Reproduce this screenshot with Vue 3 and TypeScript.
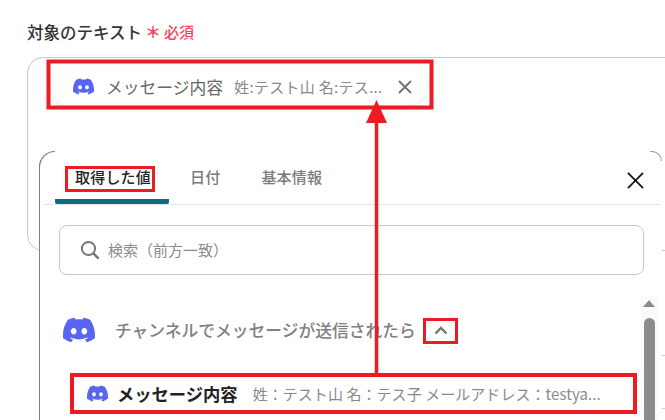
<script setup lang="ts">
const discord =
  'M20.317 4.3698a19.7913 19.7913 0 00-4.8851-1.5152.0741.0741 0 00-.0785.0371c-.211.3753-.4447.8648-.6083 1.2495-1.8447-.2762-3.68-.2762-5.4868 0-.1636-.3933-.4058-.8742-.6177-1.2495a.077.077 0 00-.0785-.037 19.7363 19.7363 0 00-4.8852 1.515.0699.0699 0 00-.0321.0277C.5334 9.0458-.319 13.5799.0992 18.0578a.0824.0824 0 00.0312.0561c2.0528 1.5076 4.0413 2.4228 5.9929 3.0294a.0777.0777 0 00.0842-.0276c.4616-.6304.8731-1.2952 1.226-1.9942a.076.076 0 00-.0416-.1057c-.6528-.2476-1.2743-.5495-1.8722-.8923a.077.077 0 01-.0076-.1277c.1258-.0943.2517-.1923.3718-.2914a.0743.0743 0 01.0776-.0105c3.9278 1.7933 8.18 1.7933 12.0614 0a.0739.0739 0 01.0785.0095c.1202.099.246.1981.3728.2924a.077.077 0 01-.0066.1276 12.2986 12.2986 0 01-1.873.8914.0766.0766 0 00-.0407.1067c.3604.698.7719 1.3628 1.225 1.9932a.076.076 0 00.0842.0286c1.961-.6067 3.9495-1.5219 6.0023-3.0294a.077.077 0 00.0313-.0552c.5004-5.177-.8382-9.6739-3.5485-13.6604a.061.061 0 00-.0312-.0286zM8.02 15.3312c-1.1825 0-2.1569-1.0857-2.1569-2.419 0-1.3332.9555-2.4189 2.157-2.4189 1.2108 0 2.1757 1.0952 2.1568 2.419 0 1.3332-.9555 2.4189-2.1569 2.4189zm7.9748 0c-1.1825 0-2.1569-1.0857-2.1569-2.419 0-1.3332.9554-2.4189 2.1569-2.4189 1.2108 0 2.1757 1.0952 2.1568 2.419 0 1.3332-.946 2.4189-2.1568 2.4189Z'
</script>

<template>
  <div class="page">
    <div class="label">
      <span class="label-text">対象のテキスト</span>
      <span class="star">＊</span>
      <span class="req">必須</span>
    </div>

    <div class="field">
      <div class="chip">
        <svg class="chip-icon" viewBox="0 0 24 24"><path :d="discord" fill="#5865f2" /></svg>
        <span class="chip-name">メッセージ内容</span>
        <span class="chip-value">姓:テスト山 名:テス...</span>
        <svg class="chip-close" viewBox="0 0 16 16">
          <path d="M2 2l12 12M14 2L2 14" stroke="#6f6f6f" stroke-width="1.8" fill="none" />
        </svg>
      </div>
    </div>

    <div class="popup">
      <div class="corner-tr"></div>
      <div class="tabs">
        <div class="tab active">取得した値</div>
        <div class="tab">日付</div>
        <div class="tab">基本情報</div>
        <svg class="popup-close" viewBox="0 0 18 18">
          <path d="M1 1l16 16M17 1L1 17" stroke="#111" stroke-width="1.8" fill="none" />
        </svg>
      </div>

      <div class="search">
        <svg class="search-icon" viewBox="0 0 20 20" fill="none" stroke="#757575">
          <circle cx="8.5" cy="8.5" r="6.6" stroke-width="2" />
          <path d="M13.4 13.4L18.6 18.6" stroke-width="2.4" />
        </svg>
        <span class="search-text">検索（前方一致）</span>
      </div>

      <div class="section">
        <svg class="section-icon" viewBox="0 0 24 24"><path :d="discord" fill="#5865f2" /></svg>
        <span class="section-title">チャンネルでメッセージが送信されたら</span>
        <svg class="chevron" viewBox="0 0 14 9" fill="none">
          <path d="M1.5 7.5L7 2l5.5 5.5" stroke="#757575" stroke-width="2.4" />
        </svg>
      </div>

      <div class="row">
        <svg class="row-icon" viewBox="0 0 24 24"><path :d="discord" fill="#5865f2" /></svg>
        <span class="row-name">メッセージ内容</span>
        <span class="row-value">姓：テスト山 名：テス子 メールアドレス：testya...</span>
      </div>

      <div class="scrollbar">
        <div class="scroll-up"></div>
        <div class="scroll-thumb"></div>
      </div>
      <div class="tick tick-a"></div>
      <div class="tick tick-b"></div>
    </div>

    <svg class="marks" viewBox="0 0 665 420" width="665" height="420">
      <g fill="none" stroke="#ed1c24">
        <rect x="48.5" y="61.5" width="383" height="46" stroke-width="4" />
        <rect x="66.5" y="167.5" width="87" height="23" stroke-width="3" />
        <rect x="424.5" y="319.5" width="32" height="23" stroke-width="3" />
        <rect x="72" y="375" width="563" height="37" stroke-width="4" />
        <path d="M376.5 120V373" stroke-width="3.5" />
      </g>
      <path d="M376.5 100L387 123H366Z" fill="#ed1c24" />
    </svg>
  </div>
</template>

<style scoped>
.page {
  position: relative;
  box-sizing: border-box;
  width: 665px;
  height: 420px;
  overflow: hidden;
  padding: 21px 0 0 27px;
  background: #fff;
  font-family: "Noto Sans CJK JP", "Noto Sans", sans-serif;
  color: #333;
}
.label {
  display: flex;
  align-items: center;
  height: 21px;
}
.label-text {
  font-size: 16.5px;
  font-weight: 500;
  color: #333;
}
.star {
  flex: none;
  margin-left: 3px;
  width: 16px;
  font-size: 16px;
  font-weight: 700;
  line-height: 21px;
  color: #f4465f;
}
.req {
  margin-left: 3px;
  font-size: 15px;
  font-weight: 500;
  color: #f4465f;
}
.field {
  box-sizing: border-box;
  width: 660px;
  height: 194px;
  margin-top: 15px;
  padding: 10px 0 0 23px;
  border: 1px solid #c8c8c8;
  border-radius: 16px;
}
.chip {
  box-sizing: border-box;
  display: flex;
  align-items: center;
  width: 375px;
  height: 37px;
  padding-left: 22px;
  border-radius: 19px;
  background: #fff;
  box-shadow: 0 3px 8px rgba(0, 0, 0, 0.07);
}
.chip-icon {
  width: 21px;
  height: 21px;
  flex: none;
}
.chip-name {
  margin-left: 12px;
  font-size: 16.8px;
  color: #666;
  white-space: nowrap;
}
.chip-value {
  margin-left: 11px;
  font-size: 15px;
  letter-spacing: 0.3px;
  color: #888;
  white-space: nowrap;
}
.chip-close {
  width: 16px;
  height: 16px;
  margin-left: 14px;
  flex: none;
}
.popup {
  position: absolute;
  box-sizing: border-box;
  left: 39px;
  top: 151px;
  width: 623px;
  height: 290px;
  background: #fff;
  border-left: 1.5px solid #808080;
  border-top-left-radius: 16px;
}
.popup::before {
  content: "";
  position: absolute;
  left: -1.5px;
  top: 0;
  width: 16px;
  height: 16px;
  border-top: 1.5px solid #808080;
  border-left: 1.5px solid #808080;
  border-top-left-radius: 16px;
  box-sizing: border-box;
}
.corner-tr {
  position: absolute;
  right: 0;
  top: 0;
  width: 12px;
  height: 10px;
  border-top: 1px solid #999;
  border-right: 1px solid #999;
  border-top-right-radius: 12px;
  box-sizing: border-box;
}
.tabs {
  position: relative;
  display: flex;
  box-sizing: border-box;
  height: 54px;
  margin: 0 2px 0 4px;
  padding-left: 11px;
  border-bottom: 1px solid #e4e4e4;
}
.tab {
  box-sizing: border-box;
  height: 48px;
  padding: 15px 20px 0 20px;
  font-size: 15px;
  font-weight: 500;
  letter-spacing: 0.2px;
  line-height: 22px;
  color: #7a7a7a;
  white-space: nowrap;
}
.tab + .tab {
  padding-left: 21px;
}
.tab.active {
  width: 114px;
  height: 53px;
  padding-right: 0;
  color: #222;
  border-bottom: 5px solid #0f6a85;
  border-radius: 0 0 2px 2px / 0 0 2px 2px;
}
.popup-close {
  position: absolute;
  right: 16px;
  top: 21px;
  width: 17px;
  height: 17px;
}
.search {
  display: flex;
  align-items: center;
  box-sizing: border-box;
  width: 585px;
  height: 50px;
  margin: 20px 0 0 19px;
  padding-left: 20px;
  border: 1px solid #c8c8c8;
  border-radius: 8px;
  font-size: 15px;
  color: #8a8a8a;
}
.search-icon {
  width: 20px;
  height: 20px;
  margin-right: 8px;
  flex: none;
}
.search-text {
  margin-top: -2px;
}
.section {
  display: flex;
  align-items: center;
  height: 40px;
  margin: 35px 0 0 23px;
}
.section-icon {
  width: 32px;
  height: 32px;
  flex: none;
}
.section-title {
  margin-left: 20px;
  font-size: 16.75px;
  font-weight: 500;
  color: #808080;
  white-space: nowrap;
}
.chevron {
  width: 14px;
  height: 9px;
  margin-left: 18px;
  flex: none;
}
.row {
  display: flex;
  align-items: center;
  box-sizing: border-box;
  width: 563px;
  height: 37px;
  margin: 25px 0 0 32px;
  padding-left: 15px;
  background: #fff;
}
.row-icon {
  width: 21px;
  height: 21px;
  flex: none;
}
.row-name {
  margin-left: 9px;
  font-size: 17.3px;
  font-weight: 700;
  color: #222;
  white-space: nowrap;
}
.row-value {
  margin-left: 15px;
  font-size: 15px;
  letter-spacing: 0.06px;
  color: #8a8a8a;
  white-space: nowrap;
}
.scrollbar {
  position: absolute;
  left: 601px;
  top: 145px;
  bottom: 0;
  width: 16px;
  background: #fafafa;
}
.scroll-up {
  width: 0;
  height: 0;
  margin: 4px auto 0;
  border-left: 6px solid transparent;
  border-right: 6px solid transparent;
  border-bottom: 7px solid #8c8c8c;
}
.scroll-thumb {
  width: 11px;
  height: 110px;
  margin: 11px 0 0 3px;
  background: #8c8c8c;
  border-radius: 6px 6px 0 0;
}
.tick {
  position: absolute;
  right: -3px;
  width: 3px;
  height: 1px;
  background: #cfcfcf;
}
.tick-a {
  top: 204px;
}
.tick-b {
  top: 257px;
}
.marks {
  position: absolute;
  left: 0;
  top: 0;
  pointer-events: none;
}
</style>
<style>
html, body { background: #fff; }
</style>
